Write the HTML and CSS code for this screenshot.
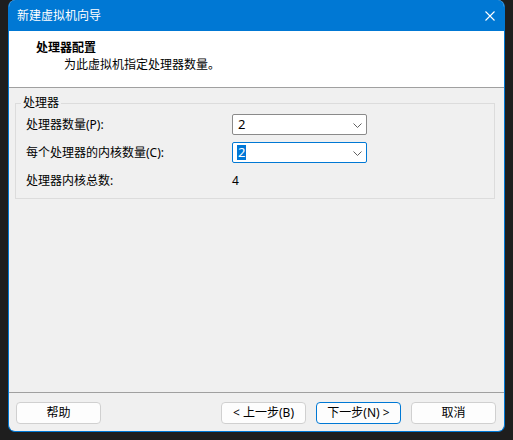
FILE: index.html
```html
<!DOCTYPE html>
<html lang="zh-CN">
<head>
<meta charset="utf-8">
<link rel="stylesheet" href="styles.css">
</head>
<body>
<div class="window">
  <div class="titlebar">
    <span class="title">新建虚拟机向导</span>
    <svg class="close" width="10" height="10" viewBox="0 0 10 10"><path d="M0.5 0.5L9.5 9.5M9.5 0.5L0.5 9.5" stroke="#ffffff" stroke-width="1.1" fill="none"/></svg>
  </div>
  <div class="header">
    <div class="h-title">处理器配置</div>
    <div class="h-sub">为此虚拟机指定处理器数量。</div>
  </div>
  <div class="content">
    <fieldset class="group">
      <legend>处理器</legend>
      <div class="grid">
        <span class="label">处理器数量(P):</span>
        <div class="combo"><span class="val">2</span><svg class="chev" width="9" height="5" viewBox="0 0 9 5"><path d="M0.5 0.5L4.5 4.5L8.5 0.5" stroke="#606060" stroke-width="1" fill="none"/></svg></div>
        <span class="label">每个处理器的内核数量(C):</span>
        <div class="combo focus"><span class="val sel">2</span><svg class="chev" width="9" height="5" viewBox="0 0 9 5"><path d="M0.5 0.5L4.5 4.5L8.5 0.5" stroke="#606060" stroke-width="1" fill="none"/></svg></div>
        <span class="label">处理器内核总数:</span>
        <span class="value">4</span>
      </div>
    </fieldset>
  </div>
  <div class="footer">
    <button class="btn">帮助</button>
    <div class="spacer"></div>
    <div class="nav">
      <button class="btn">&lt; 上一步(B)</button>
      <button class="btn default">下一步(N) &gt;</button>
      <button class="btn">取消</button>
    </div>
  </div>
</div>
</body>
</html>
```

FILE: styles.css
```css
* { box-sizing: border-box; }
html, body {
  margin: 0;
  padding: 0;
  background: #1e1e1e;
  font-family: "Noto Sans", "Noto Sans CJK SC", sans-serif;
  font-size: 12px;
  color: #000;
}
.window {
  margin-left: 8px;
  width: 497px;
  height: 432px;
  border: 1px solid #0078d4;
  border-top: none;
  border-radius: 7px;
  overflow: hidden;
  background: #f0f0f0;
  display: flex;
  flex-direction: column;
}
.titlebar {
  height: 31px;
  background: #0078d4;
  color: #fff;
  display: flex;
  align-items: center;
  justify-content: space-between;
  padding: 0 9px 0 8px;
  flex: none;
}
.title { font-size: 12px; line-height: 16px; }
.close { display: block; }
.header {
  flex: none;
  height: 57px;
  background: #fff;
  border-bottom: 1px solid #a0a0a0;
  padding: 8px 0 0 27px;
}
.h-title { font-weight: bold; line-height: 17px; }
.h-sub { line-height: 17px; padding-left: 28px; }
.content {
  flex: 1;
  padding-top: 8px;
}
.group {
  margin: 0 9px 0 6px;
  border: 1px solid #dcdcdc;
  padding: 4px 10px 7px 10px;
  min-width: 0;
}
.group legend {
  padding: 0 2px;
  margin-left: -5px;
  line-height: 14px;
  font-size: 12px;
}
.grid {
  display: grid;
  grid-template-columns: 206px 135px;
  grid-auto-rows: 21px;
  row-gap: 7px;
  align-items: center;
}
.label { line-height: 16px; }
.combo {
  height: 21px;
  background: #fff;
  border: 1px solid #8a8a8a;
  border-radius: 2px;
  display: flex;
  align-items: center;
  justify-content: space-between;
  padding: 0 4px 0 4px;
}
.combo.focus { border-color: #0078d4; }
.val { line-height: 15px; font-size: 13px; padding: 0 1px; }
.val.sel { background: #0078d7; color: #fff; }
.chev { display: block; margin-top: 1px; }
.value { line-height: 16px; }
.footer {
  flex: none;
  height: 39px;
  border-top: 1px solid #a0a0a0;
  display: flex;
  align-items: flex-start;
  padding: 9px 8px 0 7px;
}
.spacer { flex: 1; }
.nav { display: flex; gap: 10px; }
.btn {
  width: 85px;
  height: 22px;
  margin: 0;
  padding: 0;
  background: #fdfdfd;
  border: 1px solid #d0d0d0;
  border-radius: 4px;
  font-family: "Noto Sans", "Noto Sans CJK SC", sans-serif;
  font-size: 12px;
  color: #000;
  line-height: 18px;
}
.btn.default { border-color: #0078d4; }
```
